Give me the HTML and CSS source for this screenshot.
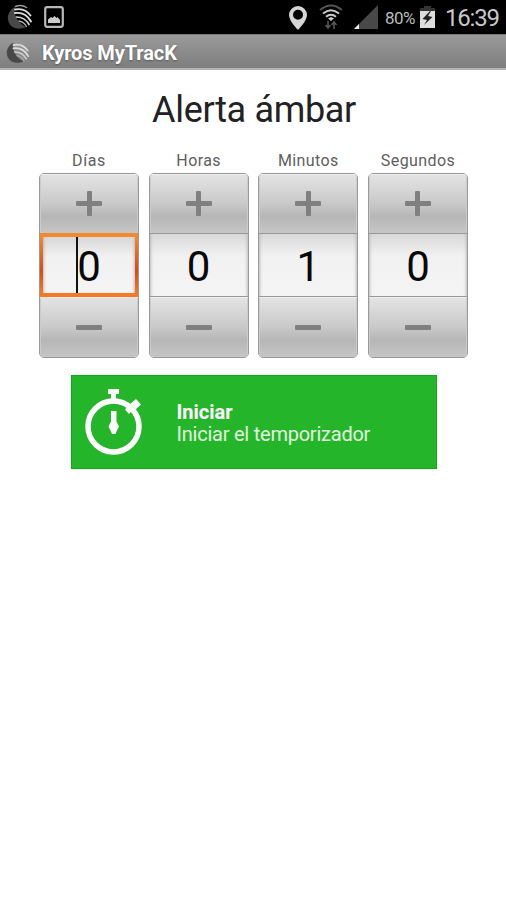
FILE: index.html
```html
<!DOCTYPE html>
<html lang="es">
<head>
<meta charset="utf-8">
<title>Kyros MyTracK</title>
<link rel="stylesheet" href="styles.css">
</head>
<body>
<svg class="defs" width="0" height="0" aria-hidden="true">
  <symbol id="globe" viewBox="0 0 26 26">
    <path d="M8 3C2 6-1 13 2 19c3 6 11 7 17 4C12 20 6 12 8 3Z" fill="#484848"/>
    <g fill="none" stroke-linecap="round">
      <path d="M8.500 2.500c4-1.500 8-1 11 1" stroke="#999" stroke-width="1.500"/>
      <path d="M8 5.500c7-1.500 12 1 15.500 6" stroke="#ddd" stroke-width="1.800"/>
      <path d="M8 9c8-1 13 3 16 8.500" stroke="#ddd" stroke-width="1.900"/>
      <path d="M9.500 13c6 0 10 3 12.500 7.500" stroke="#d0d0d0" stroke-width="1.700"/>
      <path d="M12 17c3 .5 6 2.500 7.500 5.500" stroke="#aaa" stroke-width="1.300"/>
    </g>
  </symbol>
</svg>
<header class="status">
  <svg class="status-globe" width="26" height="26"><use href="#globe"/></svg>
  <svg class="picture" width="20" height="22" viewBox="0 0 20 22"><rect x="1.200" y="1.200" width="17.600" height="19.600" rx="2" fill="none" stroke="#b8b8b8" stroke-width="2.200"/><path d="M4 17v-3.500l3-2.500 1.500 1 2-2 2 2 1-1 2.500 3v3Z" fill="#ccc"/></svg>
  <svg class="pin" width="18" height="24" viewBox="0 0 18 24"><path fill-rule="evenodd" d="M9 0a9 9 0 0 0-9 9c0 6 9 15 9 15s9-9 9-15a9 9 0 0 0-9-9Zm0 3.800a5 5 0 1 1 0 10 5 5 0 0 1 0-10Z" fill="#d6d6d6"/></svg>
  <svg class="wifi" width="24" height="26" viewBox="0 0 24 26"><g fill="none" stroke-width="2"><path d="M1 6q11-9 22 0" stroke="#555"/><path d="M4 9.500q8-6.500 16 0M7 12.700q5-4 10 0" stroke="#ccc"/></g><path d="m9 14.500 3-1.500 3 1.500-3 2.500Z" fill="#ccc"/><path d="M9 17v7m-2.500-3L9 24l2.500-3M15 25v-7m-2.500 3 2.500-3 2.500 3" fill="none" stroke="#555" stroke-width="1.600"/></svg>
  <svg class="signal" width="24" height="24" viewBox="0 0 24 24"><path d="M24 0v24H0Z" fill="#484848"/><path d="M5 19v5H0Z" fill="#eee"/></svg>
  <span class="percent">80%</span>
  <svg class="battery" width="15" height="22" viewBox="0 0 15 22"><path d="M4 0h7v2h4v4H0V2h4Z" fill="#333"/><path d="M0 5h15v17H0Z" fill="#ddd"/><path d="m10 5-7.500 8 4.500 1-3 5 8.500-8-4.500-1 3-5" fill="#222"/></svg>
  <span class="clock">16:39</span>
</header>
<div class="titlebar">
  <svg width="24" height="24"><use href="#globe"/></svg>
  <span class="app-name">Kyros MyTracK</span>
</div>
<main>
  <h1>Alerta ámbar</h1>
  <div class="pickers">
    <div class="picker"><span class="label days">Días</span><div class="control"><button class="step plus" aria-label="Más"></button><div class="value focused"><span class="digit">0</span></div><button class="step minus" aria-label="Menos"></button></div></div>
    <div class="picker"><span class="label hours">Horas</span><div class="control"><button class="step plus" aria-label="Más"></button><div class="value"><span class="digit">0</span></div><button class="step minus" aria-label="Menos"></button></div></div>
    <div class="picker"><span class="label minutes">Minutos</span><div class="control"><button class="step plus" aria-label="Más"></button><div class="value"><span class="digit">1</span></div><button class="step minus" aria-label="Menos"></button></div></div>
    <div class="picker"><span class="label seconds">Segundos</span><div class="control"><button class="step plus" aria-label="Más"></button><div class="value"><span class="digit">0</span></div><button class="step minus" aria-label="Menos"></button></div></div>
  </div>
  <div class="start">
    <svg width="58" height="68" viewBox="0 0 58 68"><circle cx="28.500" cy="37.500" r="25.500" fill="none" stroke="#fff" stroke-width="5.500"/><path d="M23 0h11v5h-3v8h-5V5h-3ZM44 16l7-6 5 5.500-5.500 5-2-.5-4.500 5-4-4.500ZM26 22h5.500v10.500l2.500 5-2.500 5-1 2.500h-3.500l-1-2.500-2.500-5 2.500-5Z" fill="#fff"/></svg>
    <div class="start-text"><strong>Iniciar</strong><span class="subtitle">Iniciar el temporizador</span></div>
  </div>
</main>
</body>
</html>
```

FILE: styles.css
```css
* { box-sizing: border-box; }
body {
  margin: 0;
  height: 900px;
  background: #fff;
  font-family: Roboto, "Liberation Sans", sans-serif;
  overflow: hidden;
}
.defs { display: block; height: 0; }
svg { flex: none; }
.status {
  display: flex;
  height: 34px;
  padding-left: 7px;
  background: #000;
  color: #c8c8c8;
}
.status-globe { margin-top: 4px; }
.picture { margin: 6px 0 0 11px; }
.pin { margin: 6px 0 0 225px; }
.wifi { margin: 4px 0 0 12px; }
.signal { margin: 5px 0 0 11px; }
.percent { width: 35px; margin-left: 7px; font-size: 17px; line-height: 37px; letter-spacing: -.5px; color: #bbb; }
.battery { margin-top: 6px; }
.clock { margin-left: 10px; font-size: 24px; line-height: 36px; letter-spacing: -1.2px; }
.titlebar {
  display: flex;
  align-items: center;
  gap: 12px;
  height: 36px;
  padding-left: 6px;
  background: linear-gradient(#9a9a9a, #7e7e7e);
  border-bottom: 2px solid #b4b4b4;
  border-top: 1px solid #777;
}
.app-name { color: #fff; font-size: 20px; font-weight: 700; line-height: 36px; text-shadow: 0 1px 2px #555; letter-spacing: -.1px; padding-top: 2px; }
h1 { margin: 19px 0 0 2px; height: 42px; text-align: center; font-size: 36px; font-weight: 400; line-height: 43px; letter-spacing: -.33px; color: #222; }
.pickers { display: grid; grid-template-columns: repeat(4, 100px); gap: 9.67px; width: 429px; margin: 19px 0 0 39px; }
.label { display: block; height: 23px; text-align: center; font-size: 16px; line-height: 21px; letter-spacing: .4px; white-space: nowrap; color: #606060; }
.days { letter-spacing: .6px; }
.control { height: 185px; border: 1px solid #999; border-radius: 5px; overflow: hidden; }
.step {
  display: block;
  position: relative;
  width: 98px;
  height: 59px;
  border: 0;
  padding: 0;
  background: linear-gradient(#e4e4e4, #c9c9c9 50%, #b6b6b6 72%, #c6c6c6);
  box-shadow: inset 0 1px #eee, inset 1px 0 #ccc, inset -1px 0 #ccc;
}
.minus { height: 60px; }
.step::before, .step.plus::after { content: ""; position: absolute; left: 36px; top: 27px; width: 26px; height: 5px; border-radius: 1px; background: #808080; }
.step.plus::after { left: 46.500px; top: 17px; width: 5px; height: 25px; }
.minus::before { top: 28px; }
.value {
  display: flex;
  align-items: center;
  justify-content: center;
  position: relative;
  height: 64px;
  margin: 0 -1px;
  border: 1px solid #999;
  background: linear-gradient(#d8d8d8, #f1f1f1 35%, #f4f4f4);
  box-shadow: inset 4px 0 3px -3px #bbb, inset -4px 0 3px -3px #bbb;
}
.digit { font-size: 42px; line-height: 64px; padding-top: 3px; color: #080808; }
.focused { border: 4px solid; border-image: linear-gradient(#f48a2e, #d94b12 60%, #f77926) 1; }
.focused::before { content: ""; position: absolute; left: 33px; top: 0; width: 2px; height: 56px; background: #111; }
.start {
  display: flex;
  width: 366px;
  height: 94px;
  margin: 17px 0 0 70.500px;
  padding: 13px 0 0 13px;
  background: #25b52b;
  border: 1px solid #0dab16;
  color: #fff;
}
.start-text { display: flex; flex-direction: column; margin: 12px 0 0 34px; font-size: 20px; line-height: 22px; }
.subtitle { color: #e2f8df; letter-spacing: -.23px; }
```
